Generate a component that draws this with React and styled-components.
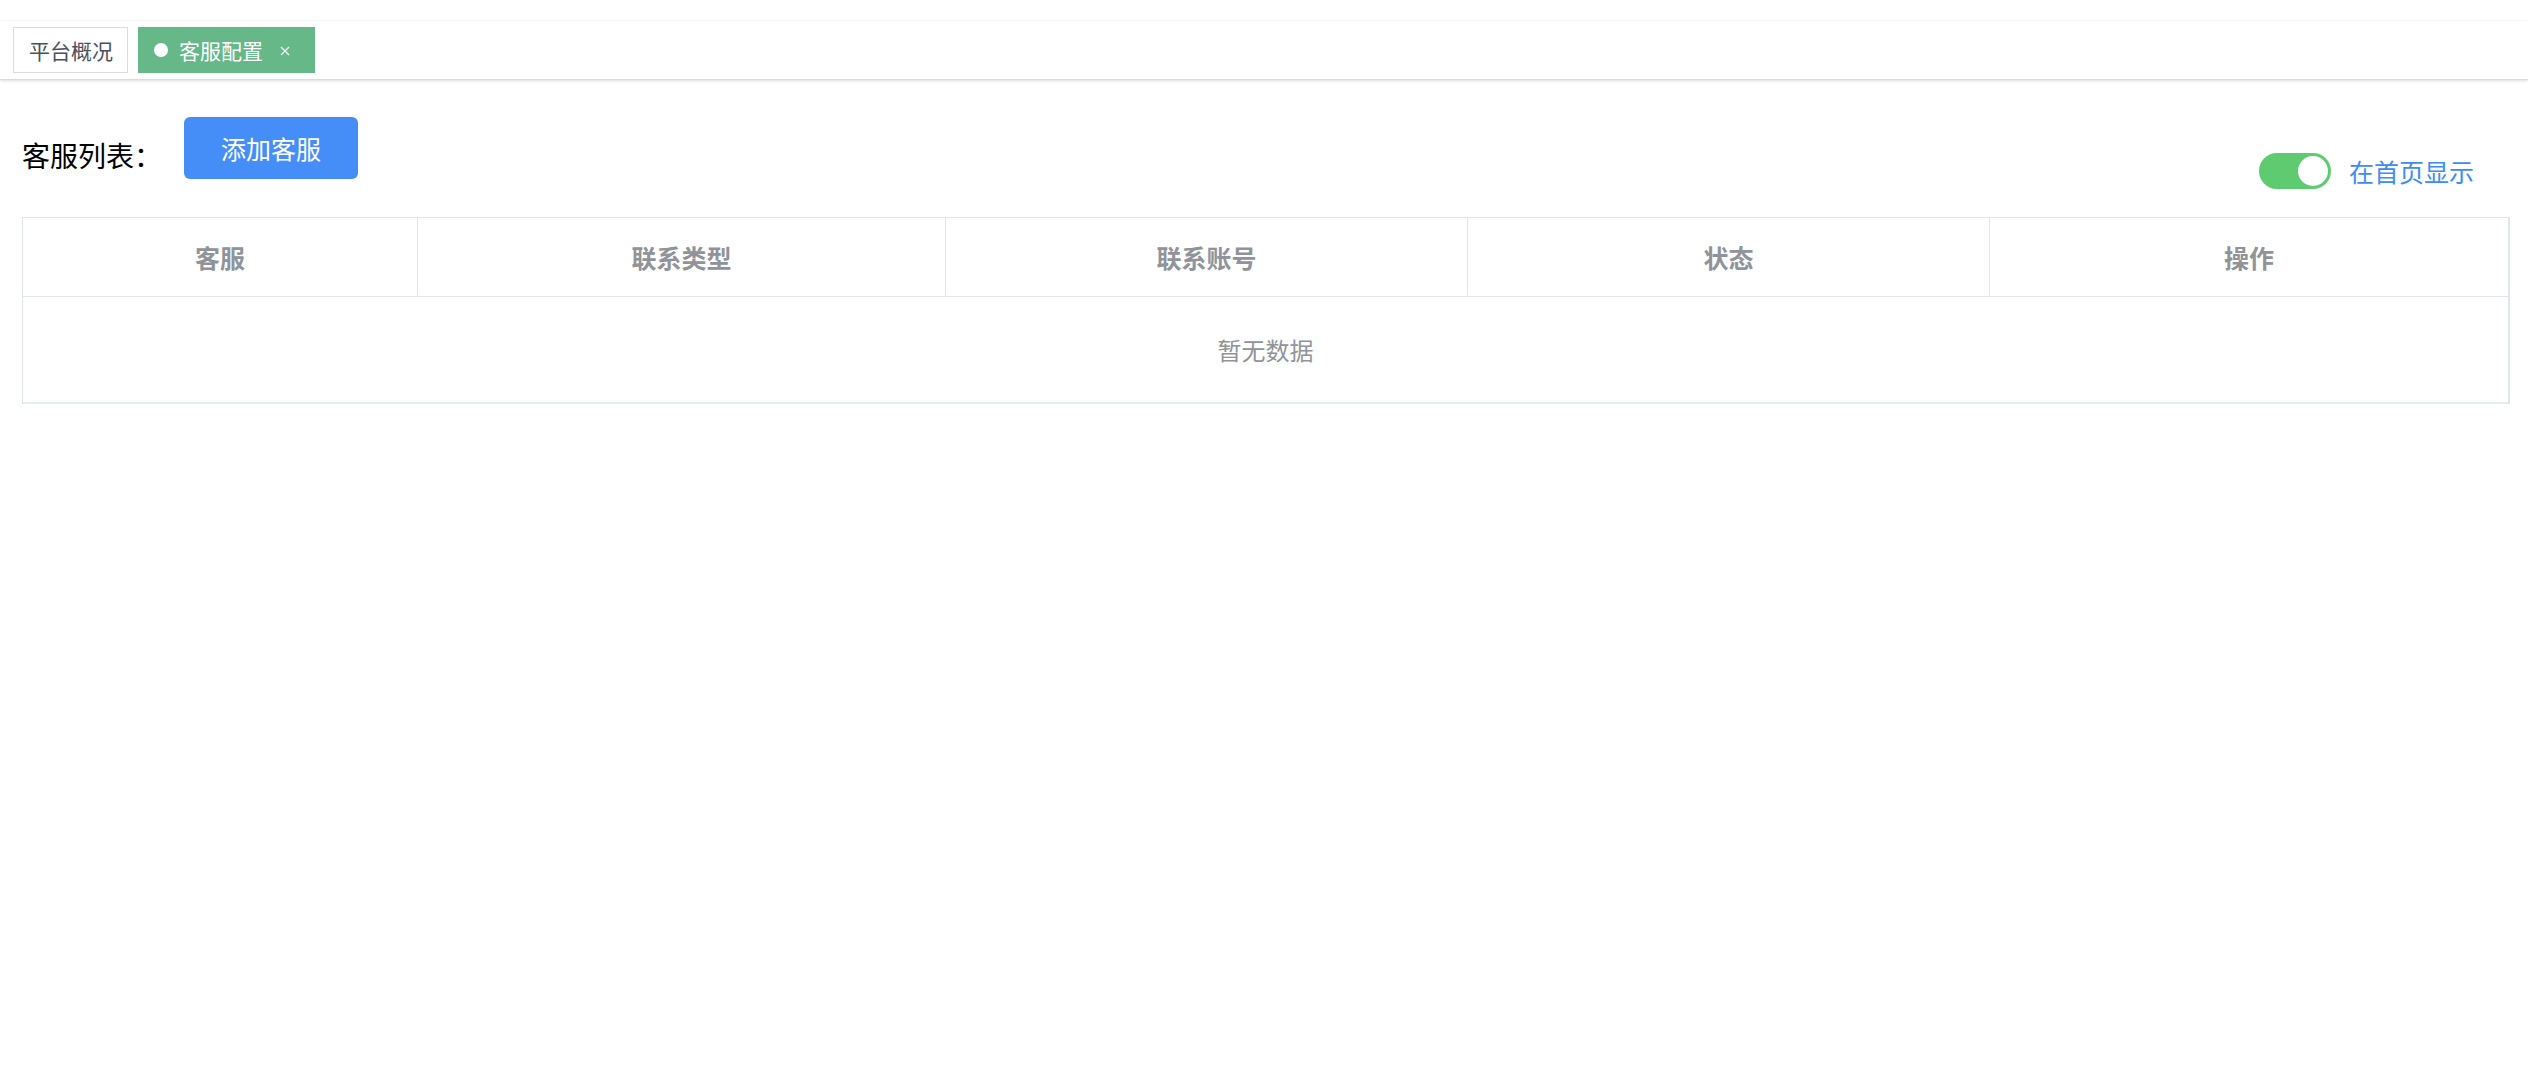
import React, { useState } from "react";
import styled, { createGlobalStyle } from "styled-components";

const GlobalStyle = createGlobalStyle`
    html, body {
        margin: 0;
        padding: 0;
        background: #fff;
    }
    body {
        font-family: "Noto Sans CJK SC", "Noto Sans", "Liberation Sans", sans-serif;
        -webkit-font-smoothing: antialiased;
    }
`;

const TopStrip = styled.div`
    height: 21px;
    background: #fff;
`;

const TagsBar = styled.div`
    height: 59px;
    box-sizing: border-box;
    background: #fff;
    border-bottom: 1px solid #d8dce5;
    box-shadow: 0 1px 3px 0 rgba(0, 0, 0, 0.12), 0 0 3px 0 rgba(0, 0, 0, 0.04);
    display: flex;
    align-items: flex-start;
    padding: 6px 0 0 13px;
    gap: 10px;
`;

const Tag = styled.div`
    height: 46px;
    box-sizing: border-box;
    display: flex;
    align-items: center;
    font-size: 21px;
    line-height: 1;
    border: 1px solid ${props => (props.active ? "#66b888" : "#d8dce5")};
    background: ${props => (props.active ? "#66b888" : "#fff")};
    color: ${props => (props.active ? "#fff" : "#495060")};
    padding: ${props => (props.active ? "0 24px 0 15px" : "0 14px 0 15px")};
`;

const Dot = styled.span`
    width: 14px;
    height: 14px;
    border-radius: 50%;
    background: #fff;
    margin-right: 11px;
`;

const CloseIcon = styled.svg`
    width: 10px;
    height: 10px;
    margin-left: 17px;
    margin-top: 2px;
`;

const Page = styled.div`
    padding: 0 18px 0 22px;
`;

const Toolbar = styled.div`
    display: flex;
    justify-content: space-between;
    align-items: flex-start;
    margin-top: 37px;
`;

const LeftGroup = styled.div`
    display: flex;
    align-items: flex-start;
`;

const Title = styled.span`
    font-size: 28px;
    line-height: 28px;
    color: #000;
    margin-top: 24px;
    width: 162px;
`;

const AddButton = styled.button`
    width: 174px;
    height: 62px;
    border: none;
    border-radius: 6px;
    background: #468ef7;
    color: #fff;
    font-family: inherit;
    font-size: 25px;
    cursor: pointer;
`;

const SwitchGroup = styled.label`
    display: flex;
    align-items: center;
    gap: 18px;
    margin-top: 36px;
    margin-right: 36px;
    cursor: pointer;
`;

const Track = styled.span`
    width: 72px;
    height: 36px;
    border-radius: 18px;
    background: ${props => (props.on ? "#5fcb70" : "#dcdfe6")};
    display: flex;
    align-items: center;
    justify-content: ${props => (props.on ? "flex-end" : "flex-start")};
    padding: 0 3px;
    box-sizing: border-box;
`;

const Knob = styled.span`
    width: 30px;
    height: 30px;
    border-radius: 50%;
    background: #fff;
`;

const SwitchText = styled.span`
    font-size: 25px;
    line-height: 36px;
    color: #3d8cf2;
`;

const Table = styled.div`
    margin-top: 28px;
    border: 1px solid #dfe6ec;
    border-right-width: 2px;
    border-bottom-width: 2px;
    border-bottom-color: #e6ebf5;
`;

const HeadRow = styled.div`
    display: grid;
    grid-template-columns: 395px 528px 522px 522px 1fr;
    height: 78px;
    border-bottom: 1px solid #dfe6ec;
`;

const HeadCell = styled.div`
    display: flex;
    align-items: center;
    justify-content: center;
    font-size: 25px;
    font-weight: 700;
    color: #909399;
    &:not(:last-child) {
        border-right: 1px solid #dfe6ec;
    }
`;

const Empty = styled.div`
    height: 105px;
    display: flex;
    align-items: center;
    justify-content: center;
    font-size: 24px;
    color: #909399;
`;

const columns = ["客服", "联系类型", "联系账号", "状态", "操作"];

export default function App() {
    const [showHome, setShowHome] = useState(true);
    return (
        <>
            <GlobalStyle />
            <TopStrip />
            <TagsBar>
                <Tag>平台概况</Tag>
                <Tag active>
                    <Dot />
                    客服配置
                    <CloseIcon viewBox="0 0 10 10">
                        <path d="M1 1 L9 9 M9 1 L1 9" stroke="#fff" strokeWidth="1.2" fill="none" />
                    </CloseIcon>
                </Tag>
            </TagsBar>
            <Page>
                <Toolbar>
                    <LeftGroup>
                        <Title>客服列表：</Title>
                        <AddButton>添加客服</AddButton>
                    </LeftGroup>
                    <SwitchGroup onClick={() => setShowHome(!showHome)}>
                        <Track on={showHome ? 1 : 0}>
                            <Knob />
                        </Track>
                        <SwitchText>在首页显示</SwitchText>
                    </SwitchGroup>
                </Toolbar>
                <Table>
                    <HeadRow>
                        {columns.map(c => (
                            <HeadCell key={c}>{c}</HeadCell>
                        ))}
                    </HeadRow>
                    <Empty>暂无数据</Empty>
                </Table>
            </Page>
        </>
    );
}
